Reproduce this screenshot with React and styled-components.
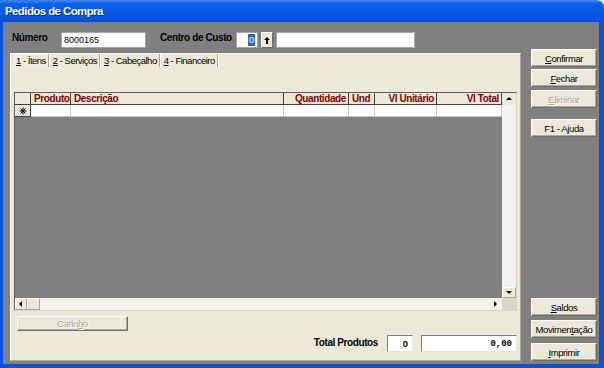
import React from 'react';
import styled, { createGlobalStyle } from 'styled-components';

const GlobalStyle = createGlobalStyle`
  html, body {
    margin: 0;
    padding: 0;
  }
  body {
    width: 604px;
    height: 368px;
    overflow: hidden;
    font-family: "Liberation Sans", Arial, sans-serif;
    font-size: 9.5px;
    letter-spacing: -0.4px;
    color: #000;
  }
  * { box-sizing: border-box; }
`;

const Window = styled.div`
  width: 604px;
  height: 368px;
  display: flex;
  flex-direction: column;
`;

const TitleBar = styled.div`
  height: 22px;
  flex: none;
  display: flex;
  align-items: center;
  padding-left: 5px;
  color: #fff;
  font-weight: bold;
  font-size: 11.5px;
  letter-spacing: -0.6px;
  border-radius: 0 7px 0 0;
  background: linear-gradient(to bottom, #3c8cf6 0%, #0a62ea 18%, #0559e4 60%, #0a4fd2 100%);
  text-shadow: 1px 1px 0 #0a2f8c;
`;

const Body = styled.div`
  flex: 1;
  display: flex;
  gap: 10px;
  background: #808080;
  border-style: solid;
  border-color: #0a50d8;
  border-width: 0 5px 4px 3px;
  padding: 0 2px 3px 7px;
`;

const LeftCol = styled.div`
  width: 511px;
  display: flex;
  flex-direction: column;
  padding-top: 10px;
`;

const TopRow = styled.div`
  height: 16px;
  display: flex;
  align-items: flex-start;
  margin-bottom: 5px;
`;

const FieldLabel = styled.span`
  width: ${p => p.$w}px;
  margin-left: ${p => p.$ml || 0}px;
  font-weight: bold;
  font-size: 10px;
  line-height: 10px;
  white-space: nowrap;
  padding-top: 1px;
`;

const TextBox = styled.div`
  width: ${p => p.$w}px;
  height: 16px;
  margin-left: ${p => p.$ml || 0}px;
  background: #fff;
  border: 1px solid #a8a8a8;
  display: flex;
  align-items: center;
  justify-content: ${p => (p.$right ? 'flex-end' : 'flex-start')};
  padding: 0 2px;
  font-size: 9px;
  letter-spacing: 0;
`;

const Selected = styled.span`
  background: #316ac5;
  color: #fff;
  line-height: 12px;
  padding: 0 1px;
`;

const SpinButton = styled.div`
  width: 12px;
  height: 16px;
  margin-left: 3px;
  background: #ece9d8;
  border: 1px solid;
  border-color: #fff #716f64 #716f64 #fff;
  display: flex;
  align-items: center;
  justify-content: center;
`;

const Panel = styled.div`
  flex: 1;
  display: flex;
  flex-direction: column;
  background: #ece9d8;
  border: 1px solid;
  border-color: #fff #aca899 #aca899 #fff;
  padding: 0 3px 8px 3px;
`;

const Tabs = styled.div`
  height: 13px;
  display: flex;
  align-items: center;
`;

const Tab = styled.div`
  height: 13px;
  display: flex;
  align-items: center;
  padding: 0 2px 0 2px;
  border-right: 1px solid #aca899;
  box-shadow: 1px 0 0 #fff;
  margin-right: 2px;
  white-space: nowrap;
  letter-spacing: -0.5px;
  background: ${p => (p.$active ? '#f1efe2' : 'transparent')};
`;

const Key = styled.span`
  text-decoration: underline;
`;

const Grid = styled.div`
  flex: 1;
  margin-top: 25px;
  display: flex;
  flex-direction: column;
  border: 1px solid;
  border-color: #5f5f5f #d8d6cc #d8d6cc #5f5f5f;
`;

const GridMain = styled.div`
  flex: 1;
  display: flex;
  min-height: 0;
`;

const Table = styled.div`
  flex: 1;
  background: #808080;
`;

const Rows = styled.div`
  display: grid;
  grid-template-columns: 16px 40px 213px 65px 26px 62px 65px;
`;

const HeadCell = styled.div`
  height: 12px;
  background: #ece9d8;
  border-right: 1px solid #404040;
  border-bottom: 1px solid #404040;
  color: #8b0000;
  font-weight: bold;
  font-size: 10px;
  line-height: 11px;
  padding: 0 2px 0 3px;
  text-align: ${p => (p.$right ? 'right' : 'left')};
  white-space: nowrap;
  overflow: hidden;
`;

const DataCell = styled.div`
  height: 12px;
  background: ${p => (p.$ind ? '#ece9d8' : '#fff')};
  border-right: 1px solid ${p => (p.$ind ? '#404040' : '#c8c8c8')};
  border-bottom: 1px solid ${p => (p.$ind ? '#404040' : '#c8c8c8')};
  display: flex;
  align-items: center;
  justify-content: center;
`;

const VScroll = styled.div`
  width: 14px;
  display: flex;
  flex-direction: column;
  background: #f3f2ec;
`;

const ArrowBox = styled.div`
  width: ${p => p.$w || 14}px;
  height: ${p => p.$h || 12}px;
  flex: none;
  background: ${p => p.$bg || '#ece9d8'};
  display: flex;
  align-items: center;
  justify-content: center;
  border: ${p => (p.$flat ? 'none' : '1px solid')};
  border-color: #fff #aca899 #aca899 #fff;
`;

const Track = styled.div`
  flex: 1;
`;

const HScroll = styled.div`
  height: 12px;
  flex: none;
  display: flex;
  background: #f3f2ec;
`;

const Corner = styled.div`
  width: 14px;
  background: #d8d6cc;
`;

const ButtonRow = styled.div`
  margin-top: 5px;
  padding-left: 3px;
  height: 15px;
  display: flex;
`;

const Button = styled.div`
  width: ${p => p.$w || 66}px;
  height: ${p => p.$h || 18}px;
  flex: none;
  margin-top: ${p => p.$mt || 0}px;
  background: #ece9d8;
  border: 1px solid;
  border-color: #fff #716f64 #716f64 #fff;
  box-shadow: inset -1px -1px 0 #aca899;
  display: flex;
  align-items: center;
  justify-content: center;
  white-space: nowrap;
  color: ${p => (p.$disabled ? '#aca899' : '#000')};
  text-shadow: ${p => (p.$disabled ? '1px 1px 0 #fff' : 'none')};
`;

const TotalRow = styled.div`
  margin-top: 4px;
  height: 17px;
  display: flex;
  justify-content: flex-end;
  align-items: center;
  gap: 8px;
`;

const TotalLabel = styled.span`
  font-weight: bold;
  font-size: 10px;
  margin-right: 1px;
  padding-bottom: 3px;
`;

const ValueBox = styled.div`
  width: ${p => p.$w}px;
  height: 17px;
  background: #fff;
  border: 1px solid;
  border-color: #808080 #e8e6dc #e8e6dc #808080;
  display: flex;
  align-items: center;
  justify-content: flex-end;
  padding-right: 4px;
  font-weight: bold;
  font-family: ${p => (p.$mono ? '"Liberation Mono", monospace' : 'inherit')};
  font-size: ${p => (p.$mono ? 9 : 9.5)}px;
  letter-spacing: 0;
`;

const SideCol = styled.div`
  width: 66px;
  display: flex;
  flex-direction: column;
  padding-top: 27px;
`;

const SideBottom = styled.div`
  margin-top: auto;
  display: flex;
  flex-direction: column;
`;

const Tri = ({ dir, size = 3 }) => {
  const s = size;
  const pts = {
    up: `0,${s} ${s * 2},${s} ${s},0`,
    down: `0,0 ${s * 2},0 ${s},${s}`,
    left: `${s},0 ${s},${s * 2} 0,${s}`,
    right: `0,0 0,${s * 2} ${s},${s}`,
  }[dir];
  const vert = dir === 'up' || dir === 'down';
  return (
    <svg width={vert ? s * 2 + 1 : s + 1} height={vert ? s + 1 : s * 2 + 1}>
      <polygon points={pts} fill="#000" />
    </svg>
  );
};

const Star = () => (
  <svg width="8" height="8" viewBox="0 0 8 8">
    <g stroke="#000" strokeWidth="1">
      <line x1="4" y1="0.5" x2="4" y2="7.5" />
      <line x1="0.5" y1="4" x2="7.5" y2="4" />
      <line x1="1.5" y1="1.5" x2="6.5" y2="6.5" />
      <line x1="6.5" y1="1.5" x2="1.5" y2="6.5" />
    </g>
  </svg>
);

const UpArrow = () => (
  <svg width="6" height="7" viewBox="0 0 6 7">
    <polygon points="3,0 6,3 4,3 4,7 2,7 2,3 0,3" fill="#000" />
  </svg>
);

const columns = [
  { label: '', right: false },
  { label: 'Produto', right: false },
  { label: 'Descrição', right: false },
  { label: 'Quantidade', right: true },
  { label: 'Und', right: false },
  { label: 'Vl Unitário', right: true },
  { label: 'Vl Total', right: true },
];

const App = () => {
  return (
    <Window>
      <GlobalStyle />
      <TitleBar>Pedidos de Compra</TitleBar>
      <Body>
        <LeftCol>
          <TopRow>
            <FieldLabel $w={49} $ml={2}>Número</FieldLabel>
            <TextBox $w={85}>8000165</TextBox>
            <FieldLabel $w={76} $ml={14}>Centro de Custo</FieldLabel>
            <TextBox $w={22} $right>
              <Selected>0</Selected>
            </TextBox>
            <SpinButton>
              <UpArrow />
            </SpinButton>
            <TextBox $w={139} $ml={3} />
          </TopRow>

          <Panel>
            <Tabs>
              <Tab $active><Key>1</Key>&nbsp;- Ítens</Tab>
              <Tab><Key>2</Key>&nbsp;- Serviços</Tab>
              <Tab><Key>3</Key>&nbsp;- Cabeçalho</Tab>
              <Tab><Key>4</Key>&nbsp;- Financeiro</Tab>
            </Tabs>

            <Grid>
              <GridMain>
                <Table>
                  <Rows>
                    {columns.map((c, i) => (
                      <HeadCell key={i} $right={c.right}>{c.label}</HeadCell>
                    ))}
                    {columns.map((c, i) => (
                      <DataCell key={i} $ind={i === 0}>{i === 0 && <Star />}</DataCell>
                    ))}
                  </Rows>
                </Table>
                <VScroll>
                  <ArrowBox $h={12} $flat $bg="#ece9d8"><Tri dir="up" /></ArrowBox>
                  <Track />
                  <ArrowBox $h={11}><Tri dir="down" /></ArrowBox>
                </VScroll>
              </GridMain>
              <HScroll>
                <ArrowBox $w={12}><Tri dir="left" /></ArrowBox>
                <ArrowBox $w={13} />
                <Track />
                <ArrowBox $w={12} $flat $bg="transparent"><Tri dir="right" /></ArrowBox>
                <Corner />
              </HScroll>
            </Grid>

            <ButtonRow>
              <Button $w={111} $h={15} $disabled>Carin<Key>h</Key>o</Button>
            </ButtonRow>

            <TotalRow>
              <TotalLabel>Total Produtos</TotalLabel>
              <ValueBox $w={26}>0</ValueBox>
              <ValueBox $w={96} $mono>0,00</ValueBox>
            </TotalRow>
          </Panel>
        </LeftCol>

        <SideCol>
          <Button><Key>C</Key>onfirmar</Button>
          <Button $mt={2}><Key>F</Key>echar</Button>
          <Button $mt={3} $disabled><Key>E</Key>liminar</Button>
          <Button $mt={11}>F1 - Ajuda</Button>
          <SideBottom>
            <Button><Key>S</Key>aldos</Button>
            <Button $mt={4}>Movimen<Key>t</Key>ação</Button>
            <Button $mt={5}><Key>I</Key>mprimir</Button>
          </SideBottom>
        </SideCol>
      </Body>
    </Window>
  );
};

export default App;
